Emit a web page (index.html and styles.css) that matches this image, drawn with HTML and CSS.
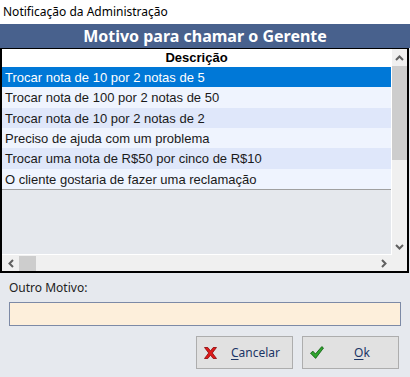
FILE: index.html
```html
<!DOCTYPE html>
<html lang="pt">
<head>
    <meta charset="UTF-8">
    <title>Notificação da Administração</title>
    <link rel="stylesheet" href="styles.css">
</head>
<body>
    <div class="titlebar">Notificação da Administração</div>
    <div class="banner">Motivo para chamar o Gerente</div>

    <div class="listbox">
        <div class="viewport">
            <div class="col-header">Descrição</div>
            <div class="rows">
                <div class="row selected">Trocar nota de 10 por 2 notas de 5</div>
                <div class="row">Trocar nota de 100 por 2 notas de 50</div>
                <div class="row">Trocar nota de 10 por 2 notas de 2</div>
                <div class="row">Preciso de ajuda com um problema</div>
                <div class="row">Trocar uma nota de R$50 por cinco de R$10</div>
                <div class="row">O cliente gostaria de fazer uma reclamação</div>
            </div>
        </div>

        <div class="vscroll">
            <div class="sb-btn">
                <svg width="9" height="6" viewBox="0 0 9 6"><polyline points="1,5 4.5,1.5 8,5" fill="none" stroke="#606060" stroke-width="2"/></svg>
            </div>
            <div class="vthumb"></div>
            <div class="sb-fill"></div>
            <div class="sb-btn">
                <svg width="9" height="6" viewBox="0 0 9 6"><polyline points="1,1 4.5,4.5 8,1" fill="none" stroke="#606060" stroke-width="2"/></svg>
            </div>
        </div>

        <div class="hscroll">
            <div class="sb-btn h">
                <svg width="6" height="9" viewBox="0 0 6 9"><polyline points="5,1 1.5,4.5 5,8" fill="none" stroke="#606060" stroke-width="2"/></svg>
            </div>
            <div class="hthumb"></div>
            <div class="sb-fill"></div>
            <div class="sb-btn h">
                <svg width="6" height="9" viewBox="0 0 6 9"><polyline points="1,1 4.5,4.5 1,8" fill="none" stroke="#606060" stroke-width="2"/></svg>
            </div>
        </div>
        <div class="corner"></div>
    </div>

    <div class="form">
        <label class="field-label" for="outro">Outro Motivo:</label>
        <input type="text" id="outro" class="field">

        <div class="actions">
            <button class="btn">
                <svg class="ico" width="13" height="12" viewBox="0 0 13 12">
                    <polygon points="0.5,0.5 3.8,0.5 6.5,3.9 9.2,0.5 12.5,0.5 8.3,6 12.5,11.5 9.2,11.5 6.5,8.1 3.8,11.5 0.5,11.5 4.7,6" fill="#de1a1a" stroke="#8c0606" stroke-width="0.8"/>
                </svg>
                <span class="btn-text"><u>C</u>ancelar</span>
            </button>
            <button class="btn">
                <svg class="ico" width="14" height="13" viewBox="0 0 14 13">
                    <polygon points="0.5,7.2 3,5.2 5.4,8 11.8,0.6 13.5,2 5.6,12.4" fill="#2fa52f" stroke="#0d5c0d" stroke-width="0.8"/>
                </svg>
                <span class="btn-text"><u>O</u>k</span>
            </button>
        </div>
    </div>
</body>
</html>
```

FILE: styles.css
```css
* {
    box-sizing: border-box;
}

body {
    margin: 0;
    width: 410px;
    height: 377px;
    background: #e6e9ee;
    font-family: "Liberation Sans", Arial, sans-serif;
    color: #1a1a1a;
    overflow: hidden;
}

.titlebar {
    height: 24px;
    background: #fff;
    padding-left: 3px;
    font-family: "Noto Sans", sans-serif;
    font-size: 12px;
    line-height: 24px;
    color: #000;
}

.banner {
    height: 24px;
    background: #48618d;
    color: #fff;
    text-align: center;
    font-family: "Noto Sans", sans-serif;
    font-weight: bold;
    font-size: 16px;
    line-height: 24px;
}

/* grid da lista */
.listbox {
    width: 409px;
    height: 225px;
    border: 2px solid #000;
    border-top-width: 1px;
    display: grid;
    grid-template-columns: 390px 15px;
    grid-template-rows: 206px 16px;
    background: #f0f0f0;
}

.viewport {
    background: #e5e8ed;
    border-right: 1px solid #fff;
    border-bottom: 1px solid #fff;
    overflow: hidden;
}

.col-header {
    height: 18px;
    background: #fff;
    text-align: center;
    font-weight: bold;
    font-size: 13px;
    line-height: 18px;
    color: #000;
}

.rows {
    border-bottom: 1px solid #a0a0a0;
}

.row {
    height: 20.33px;
    padding: 1px 0 0 3px;
    font-size: 13px;
    line-height: 20px;
    white-space: nowrap;
    background: #eff4fe;
}

.row:nth-child(odd) {
    background: #dfe7fa;
}

.row.selected {
    background: #0078d7;
    color: #fff;
}

.vscroll {
    display: flex;
    flex-direction: column;
    background: #f0f0f0;
}

.sb-btn {
    height: 17px;
    display: flex;
    align-items: center;
    justify-content: center;
    flex-shrink: 0;
}

.sb-btn.h {
    height: auto;
    width: 17px;
}

.vthumb {
    height: 94px;
    background: #cdcdcd;
}

.sb-fill {
    flex: 1;
}

.hscroll {
    display: flex;
    background: #f0f0f0;
}

.hthumb {
    width: 17px;
    margin-top: 1px;
    background: #cdcdcd;
}

.corner {
    background: #f0f0f0;
}

/* formulario */
.form {
    padding: 7px 9px 0 9px;
}

.field-label {
    display: block;
    font-family: "Noto Sans", sans-serif;
    font-size: 12px;
    line-height: 16px;
    color: #222;
}

.field {
    display: block;
    width: 392px;
    height: 24px;
    margin-top: 6px;
    background: #fdefdb;
    border: 1px solid #7d8aa6;
    outline: none;
}

.actions {
    display: flex;
    justify-content: flex-end;
    gap: 9px;
    margin-top: 10px;
    padding-right: 2px;
}

.btn {
    width: 97px;
    height: 33px;
    display: flex;
    align-items: center;
    padding: 0 0 0 7px;
    background: #e1e1e1;
    border: 1px solid #adadad;
    font-family: "Noto Sans", sans-serif;
    font-size: 12px;
    color: #1b3566;
}

.btn-text {
    flex: 1;
    text-align: center;
    padding-left: 2px;
}

.btn u {
    text-underline-offset: 2px;
}
```
